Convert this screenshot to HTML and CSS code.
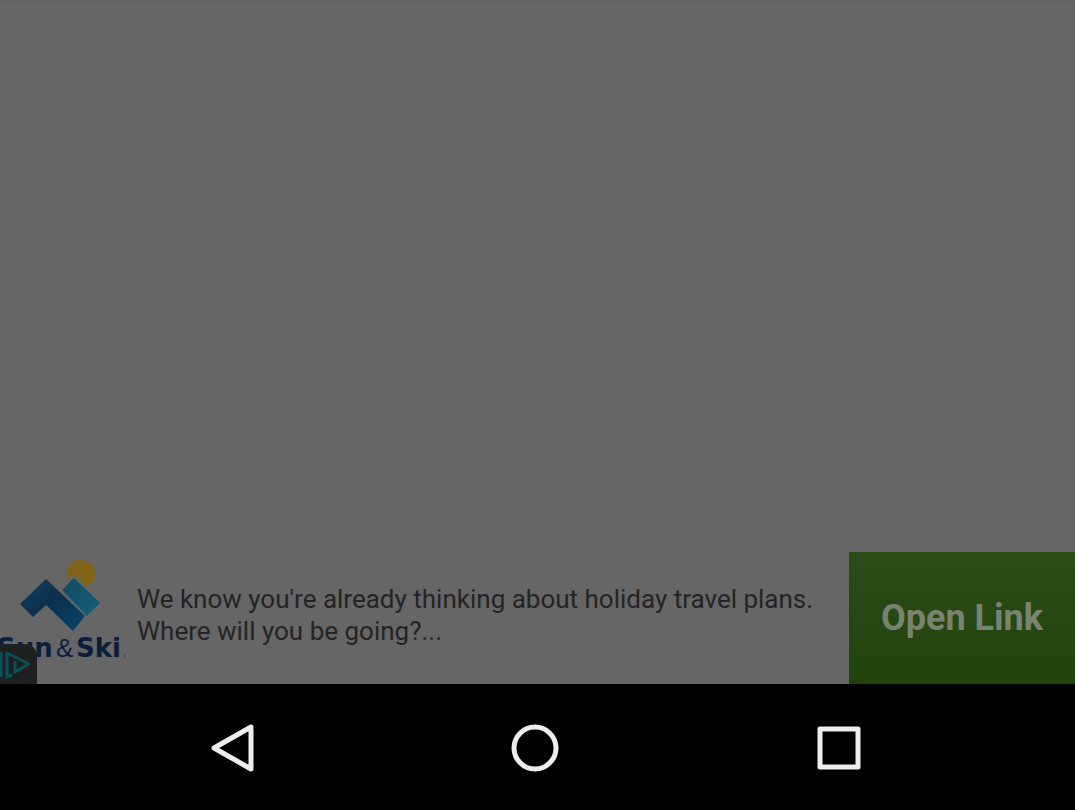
FILE: index.html
```html
<!DOCTYPE html>
<html lang="en">
<head>
<meta charset="utf-8">
<meta name="viewport" content="width=device-width, initial-scale=1">
<title>Sun &amp; Ski</title>
<link rel="stylesheet" href="styles.css">
</head>
<body>
<main class="screen">
  <div class="content"></div>
  <section class="ad" aria-label="Advertisement">
    <div class="brand">
      <svg class="logo" viewBox="0 0 132 132" role="img" aria-label="Sun &amp; Ski logo">
        <defs>
          <linearGradient id="peak" x1="0" y1="0" x2="1" y2="1">
            <stop offset="0" stop-color="#123f5a"/>
            <stop offset="0.45" stop-color="#0c2f4c"/>
            <stop offset="1" stop-color="#08456a"/>
          </linearGradient>
          <linearGradient id="slope" x1="0" y1="0" x2="1" y2="1">
            <stop offset="0" stop-color="#114a62"/>
            <stop offset="1" stop-color="#176078"/>
          </linearGradient>
        </defs>
        <circle cx="81" cy="22" r="14" fill="#806314"/>
        <path d="M59 37 74 22 103 51 87 67Z" fill="#666"/>
        <path d="M20 52 46 27 85 64 73 79 46 53 33 65Z" fill="url(#peak)"/>
        <path d="M62 38 74 26 100 51 87 64Z" fill="url(#slope)"/>
        <g class="logo-text">
          <text class="logo-word" x="-3" y="105">Sun</text>
          <text class="logo-amp" x="56" y="105">&amp;</text>
          <text class="logo-word" x="76" y="105">Ski</text>
        </g>
        <circle cx="125" cy="104" r="1" fill="#4d3f43"/>
      </svg>
      <button class="adchoices" type="button" aria-label="Ad choices">
        <svg viewBox="0 0 37 40" aria-hidden="true">
          <path d="M1 8v25" />
          <path d="M12 31 7 33V9L29 20 15 28V17" />
        </svg>
      </button>
    </div>
    <p class="message">We know you're already thinking about holiday travel plans. Where will you be going?...</p>
    <a class="open" href="#">Open Link</a>
  </section>
  <nav class="navbar" aria-label="System navigation">
    <button type="button" aria-label="Back">
      <svg viewBox="0 0 56 56"><path d="M10 28 47 7V49Z"/></svg>
    </button>
    <button type="button" aria-label="Home">
      <svg viewBox="0 0 56 56"><circle cx="28" cy="28" r="21"/></svg>
    </button>
    <button type="button" aria-label="Recent apps">
      <svg viewBox="0 0 56 56"><rect x="9" y="9" width="38" height="38"/></svg>
    </button>
  </nav>
</main>
</body>
</html>
```
FILE: styles.css
```css
* { box-sizing: border-box; }

body {
  margin: 0;
  background: #666;
  font-family: Roboto, "Liberation Sans", sans-serif;
}

.screen {
  display: flex;
  flex-direction: column;
  min-height: 100vh;
}

.content {
  flex: 1;
  background: linear-gradient(#636363, #666 4px);
}

.ad {
  display: flex;
  align-items: stretch;
  min-height: 132px;
  overflow: hidden;
}

.brand {
  position: relative;
  flex: none;
  width: 132px;
}

.logo {
  display: block;
  width: 132px;
  height: 132px;
}

.logo-text { fill: #0b1f3c; }

.logo-word {
  font: bold 26px "DejaVu Sans", sans-serif;
}

.logo-amp {
  font: 26px "Liberation Sans", sans-serif;
}

.adchoices {
  position: absolute;
  left: 0;
  bottom: 0;
  width: 37px;
  height: 40px;
  padding: 0;
  border: 0;
  border-top-right-radius: 12px;
  background: #1f2022;
}

.adchoices svg {
  display: block;
  fill: none;
  stroke: #0b5058;
  stroke-width: 3;
  stroke-linejoin: round;
}

.message {
  flex: 1;
  align-self: center;
  margin: 0;
  padding: 0 24px 6px 5px;
  color: #242424;
  font-size: 26px;
  line-height: 32px;
}

.open {
  display: flex;
  flex: none;
  align-items: center;
  justify-content: center;
  width: 226px;
  background: linear-gradient(#2d4c18, #21430c);
  color: #788471;
  font-size: 36px;
  font-weight: bold;
  text-decoration: none;
}

.navbar {
  display: grid;
  grid-template-columns: repeat(3, 1fr);
  height: 126px;
  padding: 2px 84px 0 80px;
  background: #000;
}

.navbar button {
  display: flex;
  align-items: center;
  justify-content: center;
  padding: 0;
  border: 0;
  background: none;
}

.navbar svg {
  width: 56px;
  height: 56px;
  fill: none;
  stroke: #eee;
  stroke-width: 5;
  stroke-linejoin: round;
}
```
